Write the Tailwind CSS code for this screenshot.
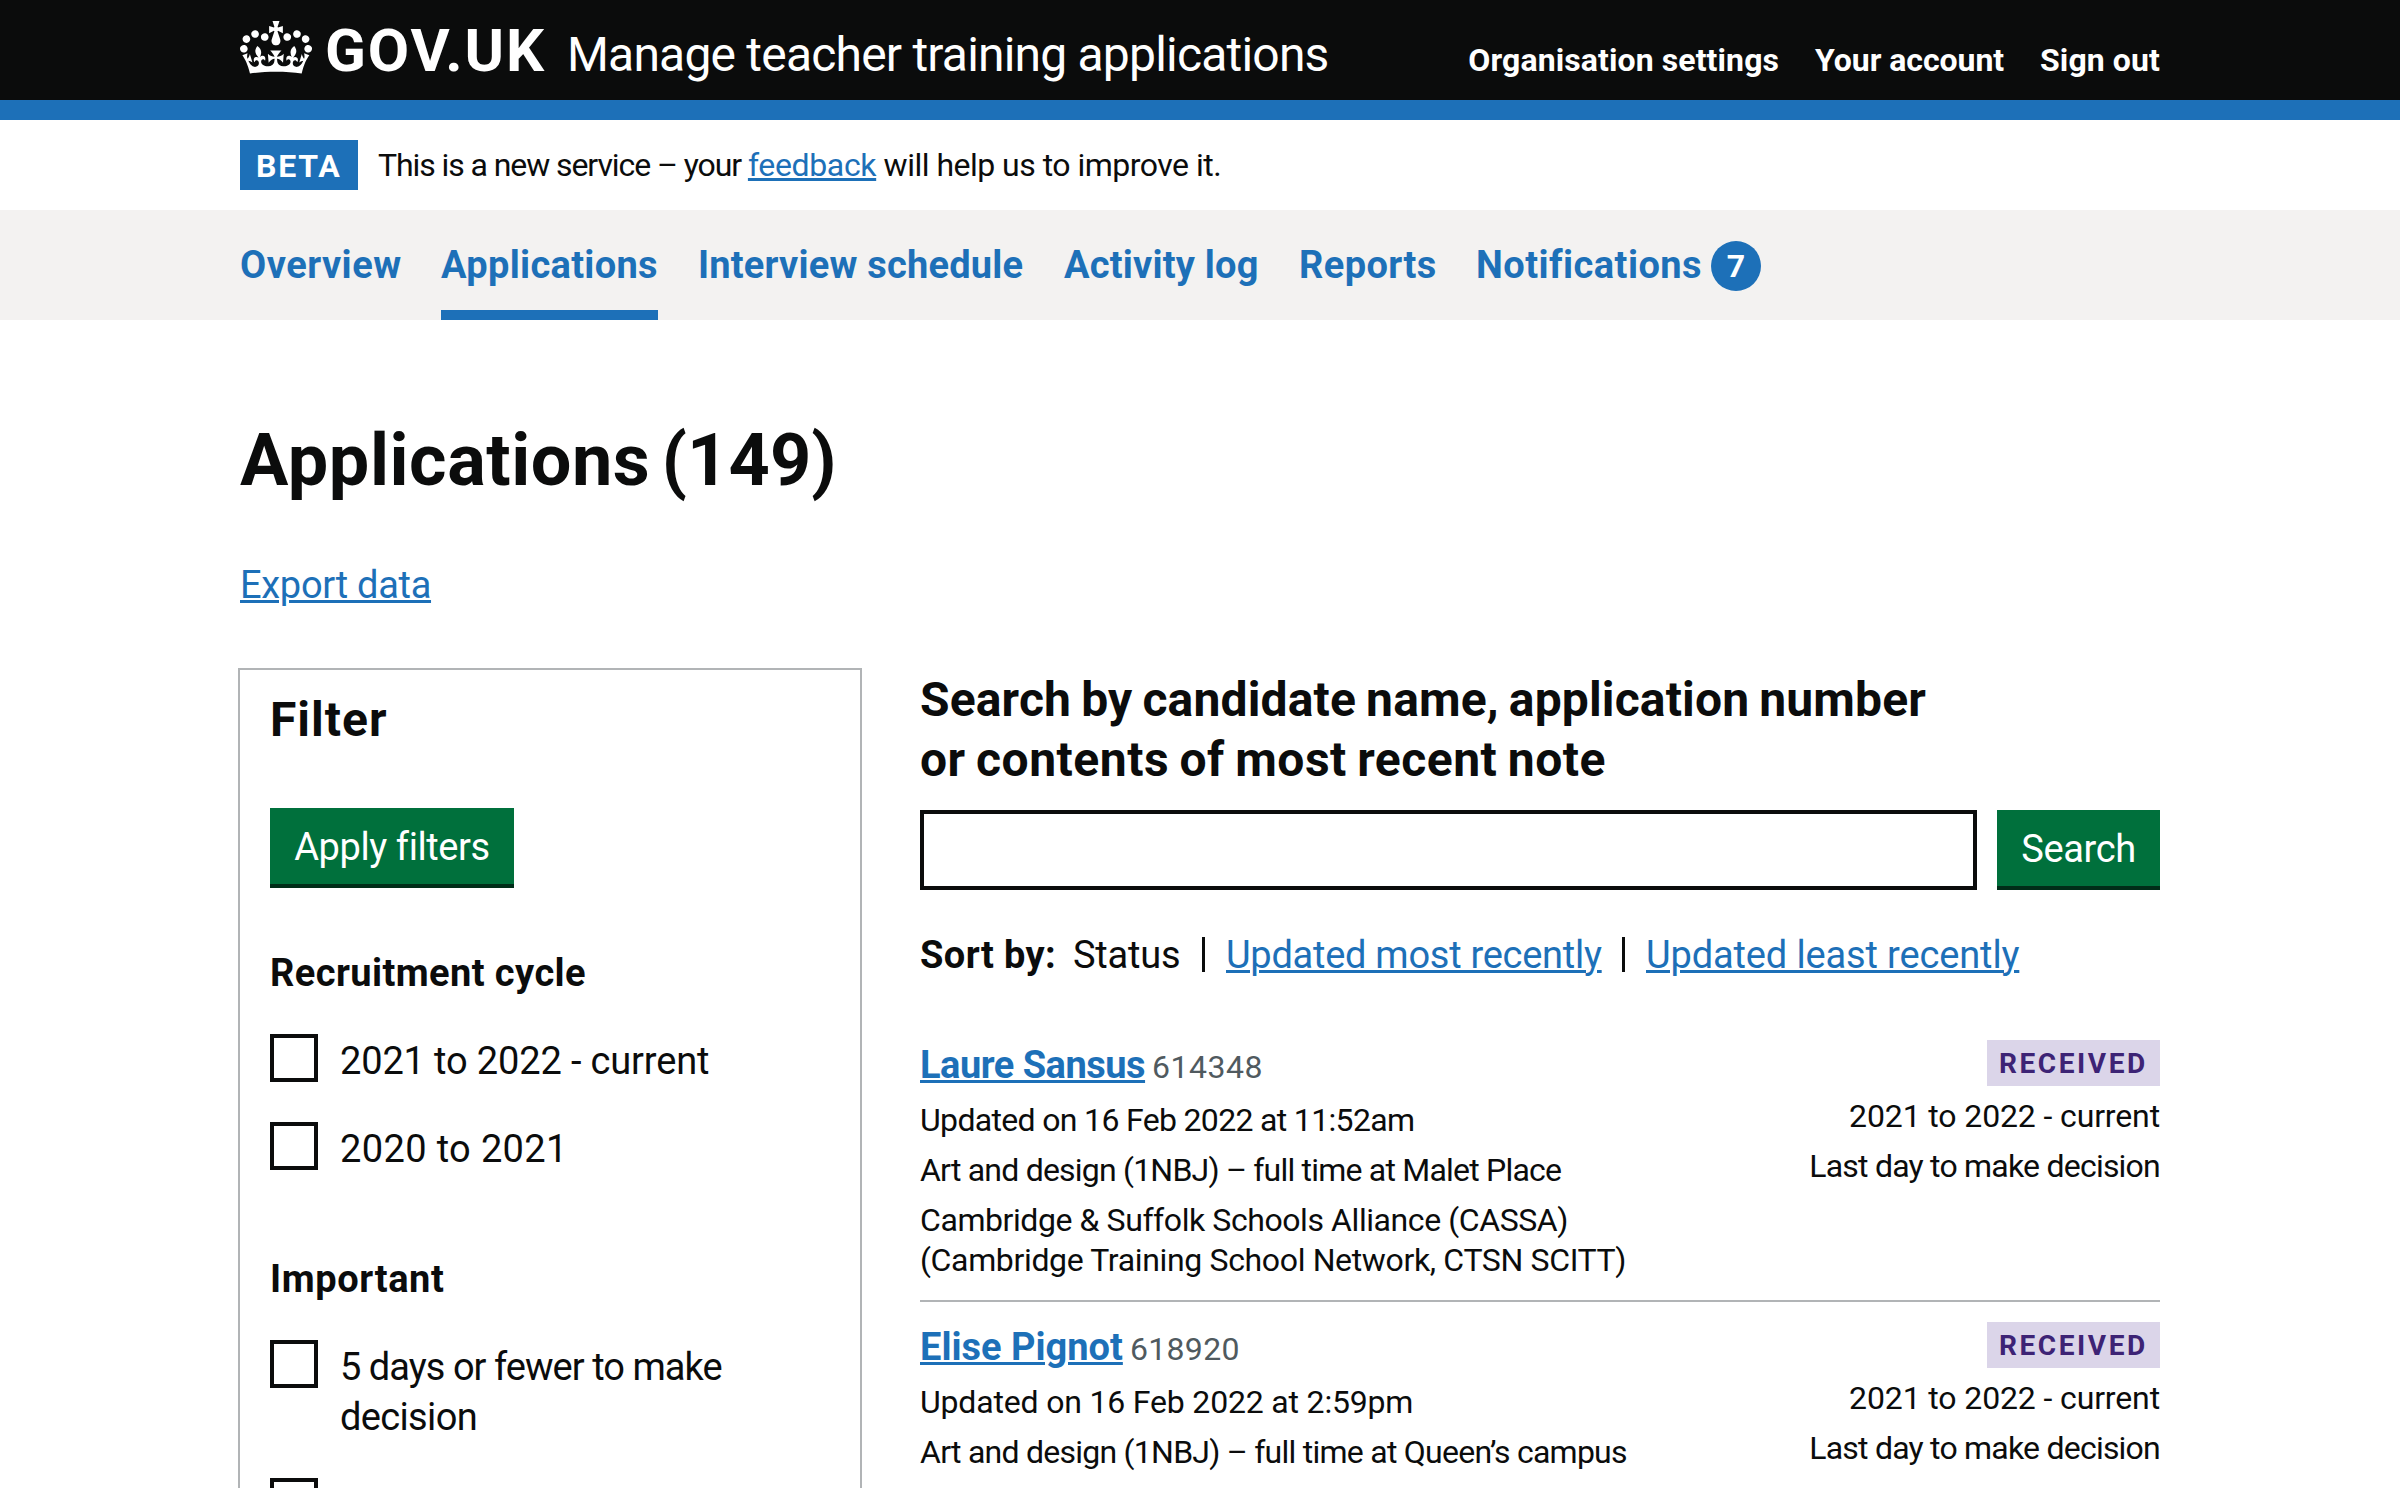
<!DOCTYPE html>
<html lang="en">
<head>
<meta charset="utf-8">
<title>Applications (149) – Manage teacher training applications – GOV.UK</title>
<script src="https://cdn.jsdelivr.net/npm/@tailwindcss/browser@4"></script>
</head>
<body class="h-[1488px] overflow-hidden bg-white font-['Roboto',sans-serif] text-[38px] leading-[50px] text-[#0b0c0c]">

<header class="h-[120px] border-b-20 border-[#1d70b8] bg-[#0b0c0c] text-white">
  <div class="mx-auto flex w-[1920px] items-baseline pt-[21px] whitespace-nowrap">
    <svg class="h-[53px] w-[72px] shrink-0 self-start" viewBox="0 0 132 97" preserveAspectRatio="none" fill="currentColor" aria-hidden="true"><path fill-rule="evenodd" d="M25 30.2c3.5 1.5 7.7-.2 9.1-3.7 1.5-3.6-.2-7.8-3.9-9.2-3.6-1.4-7.6.3-9.1 3.9-1.4 3.5.3 7.5 3.9 9zM9 39.5c3.6 1.5 7.8-.2 9.2-3.7 1.5-3.6-.2-7.8-3.9-9.1-3.6-1.5-7.6.2-9.1 3.8-1.4 3.5.3 7.5 3.8 9zM4.4 57.2c3.5 1.5 7.7-.2 9.1-3.8 1.5-3.6-.2-7.7-3.9-9.1-3.5-1.5-7.6.3-9.1 3.8-1.4 3.5.3 7.6 3.9 9.1zm38.3-21.4c3.5 1.5 7.7-.2 9.1-3.8 1.5-3.6-.2-7.7-3.9-9.1-3.6-1.5-7.6.3-9.1 3.8-1.3 3.6.4 7.7 3.9 9.1zm64.4-5.6c-3.6 1.5-7.8-.2-9.1-3.7-1.5-3.6.2-7.8 3.8-9.2 3.6-1.4 7.7.3 9.2 3.9 1.3 3.5-.4 7.5-3.9 9zm15.9 9.3c-3.6 1.5-7.7-.2-9.1-3.7-1.5-3.6.2-7.8 3.7-9.1 3.6-1.5 7.7.2 9.2 3.8 1.5 3.5-.3 7.5-3.8 9zm4.7 17.7c-3.6 1.5-7.8-.2-9.2-3.8-1.5-3.6.2-7.7 3.9-9.1 3.6-1.5 7.7.3 9.2 3.8 1.3 3.5-.4 7.6-3.9 9.1zM89.3 35.8c-3.6 1.5-7.8-.2-9.2-3.8-1.4-3.6.2-7.7 3.9-9.1 3.6-1.5 7.7.3 9.2 3.8 1.4 3.6-.3 7.7-3.9 9.1zM69.7 17.7l8.9 4.7V9.3l-8.9 2.8c-.2-.3-.5-.6-.9-.9L72.4 0H59.6l3.5 11.2c-.3.3-.6.5-.9.9l-8.8-2.8v13.1l8.8-4.7c.3.3.6.7.9.9l-5 15.4v.1c-.2.8-.4 1.6-.4 2.4 0 4.1 3.1 7.5 7 8.1h.2c.3 0 .7.1 1 .1.4 0 .7 0 1-.1h.2c4-.6 7.1-4.1 7.1-8.1 0-.8-.1-1.7-.4-2.4V34l-5.1-15.4c.4-.2.7-.6 1-.9zM66 92.8c16.9 0 32.8 1.1 47.1 3.2 4-16.9 8.9-26.7 14-33.5l-9.6-3.4c1 4.9 1.1 7.2 0 10.2-1.5-1.4-3-4.3-4.2-8.7L108.6 76c2.8-2 5-3.2 7.5-3.3-4.4 9.4-10 11.9-13.6 11.2-4.3-.8-6.3-4.6-5.6-7.9 1-4.7 5.7-5.9 8-.5 4.3-8.7-3-11.4-7.6-8.8 7.1-7.2 7.9-13.5 2.1-21.1-8 6.1-8.1 12.3-4.5 20.8-4.7-5.4-12.1-2.5-9.5 6.2 3.4-5.2 7.9-2 7.2 3.1-.6 4.3-6.4 7.8-13.5 7.2-10.3-.9-10.9-8-11.2-13.8 2.5-.5 7.1 1.8 11 7.3L80.2 60c-4.1 4.4-8 5.3-12.3 5.4 1.4-4.4 8-11.6 8-11.6H55.5s6.4 7.2 7.9 11.6c-4.2-.1-8-1-12.3-5.4l1.4 16.4c3.9-5.5 8.5-7.7 10.9-7.3-.3 5.8-.9 12.8-11.1 13.8-7.2.6-12.9-2.9-13.5-7.2-.7-5 3.8-8.3 7.1-3.1 2.7-8.7-4.6-11.6-9.4-6.2 3.7-8.5 3.6-14.7-4.6-20.8-5.8 7.6-5 13.9 2.2 21.1-4.7-2.6-11.9.1-7.7 8.8 2.3-5.5 7.1-4.2 8.1.5.7 3.3-1.3 7.1-5.7 7.9-3.5.7-9-1.8-13.5-11.2 2.5.1 4.7 1.3 7.5 3.3l-4.7-15.4c-1.2 4.4-2.7 7.2-4.3 8.7-1.1-3-.9-5.3 0-10.2l-9.5 3.4c5 6.9 9.9 16.7 14 33.5 14.8-2.1 30.8-3.2 47.7-3.2z"/></svg>
    <span class="ml-[13px] w-[242px] text-[60px] leading-[60px] font-bold tracking-[1.92px]">GOV.UK</span>
    <span class="text-[48px] tracking-[-0.8px]">Manage teacher training applications</span>
    <nav class="ml-auto flex gap-[36px] text-[32px] leading-[40px] font-bold">
      <a class="tracking-[0.1px]">Organisation settings</a>
      <a class="tracking-[-0.06px]">Your account</a>
      <a class="tracking-[0.1px]">Sign out</a>
    </nav>
  </div>
</header>

<div class="mx-auto flex h-[90px] w-[1920px] pt-[20px] text-[32px] whitespace-pre">
  <strong class="h-[50px] w-[118px] bg-[#1d70b8] pt-px pl-[16px] tracking-[1.8px] text-white">BETA</strong>
  <p class="ml-[20px] tracking-[-0.49px]"><span class="tracking-[-1.08px]">This is a new service – your </span><a class="text-[#1d70b8] underline decoration-[3px] underline-offset-[2px] tracking-[-0.35px]">feedback</a><span class="tracking-[-0.51px]"> will help us to improve it.</span></p>
</div>

<nav class="h-[110px] bg-[#f3f2f1] font-bold whitespace-nowrap text-[#1d70b8]">
  <div class="mx-auto flex h-full w-[1920px] gap-[40px] pt-[30px]">
    <a class="w-[161px] tracking-[0.48px]">Overview</a>
    <a class="w-[217px] border-b-10 border-[#1d70b8] tracking-[0.32px]">Applications</a>
    <a class="w-[326px] tracking-[0.2px]">Interview schedule</a>
    <a class="w-[195px] tracking-[0.2px]">Activity log</a>
    <a class="w-[137px] tracking-[0.4px]">Reports</a>
    <a class="flex tracking-[0.45px]"><span class="w-[235px]">Notifications</span><span class="mt-px size-[50px] rounded-full bg-[#1d70b8] text-center text-[32px] leading-[50px] tracking-normal text-white">7</span></a>
  </div>
</nav>

<main class="mx-auto w-[1920px] pt-[101px]">
  <h1 class="text-[72px] leading-[80px] font-bold tracking-[0.1px]"><span class="tracking-[0.55px] [word-spacing:-7px]">Applications </span>(149)</h1>
  <p class="mt-[59px]"><a class="text-[#1d70b8] underline decoration-[3px] underline-offset-[2px] tracking-[-0.3px]">Export data</a></p>

  <div class="mt-[58px] flex">
    <aside class="-ml-[2px] h-[900px] w-[624px] shrink-0 border-2 border-[#b1b4b6] px-[30px] pt-[20px]">
      <h2 class="text-[48px] leading-[60px] font-bold tracking-[1.02px]">Filter</h2>
      <button class="mt-[58px] block h-[80px] w-[244px] border-b-4 border-[#002d18] bg-[#00703c] pt-[2px] text-[38px] leading-[74px] tracking-[-0.41px] text-white">Apply filters</button>

      <h3 class="mt-[60px] font-bold tracking-[0.42px]">Recruitment cycle</h3>
      <div class="mt-[36px] flex flex-col gap-[36px]">
        <label class="flex gap-[22px]"><span class="size-[48px] shrink-0 border-4 border-[#0b0c0c]"></span><span class="pt-[2px] tracking-[-0.15px]">2021 to 2022 - current</span></label>
        <label class="flex gap-[22px]"><span class="size-[48px] shrink-0 border-4 border-[#0b0c0c]"></span><span class="pt-[2px] tracking-[0.36px]">2020 to 2021</span></label>
      </div>

      <h3 class="mt-[80px] font-bold tracking-[0.6px]">Important</h3>
      <div class="mt-[36px] flex flex-col gap-[36px]">
        <label class="flex gap-[22px]"><span class="size-[48px] shrink-0 border-4 border-[#0b0c0c]"></span><span class="pt-[2px] tracking-[-0.96px]">5 days or fewer to make<br><span class="tracking-[-0.65px]">decision</span></span></label>
        <label class="flex gap-[22px]"><span class="size-[48px] shrink-0 border-4 border-[#0b0c0c]"></span></label>
      </div>
    </aside>

    <section class="ml-[58px] w-[1240px] shrink-0 pt-[2px]">
      <h2 class="text-[48px] leading-[60px] font-bold whitespace-nowrap [word-spacing:-2px]"><span class="tracking-[0.15px]">Search by candidate name, application number</span><br><span class="tracking-[0.5px]">or contents of most recent note</span></h2>
      <div class="mt-[20px] flex gap-[20px]">
        <input class="h-[80px] w-[1057px] border-4 border-[#0b0c0c]" aria-label="Search">
        <button class="h-[80px] w-[163px] border-b-4 border-[#002d18] bg-[#00703c] pt-[2px] text-[38px] leading-[74px] tracking-[-0.36px] text-white">Search</button>
      </div>

      <div class="mt-[40px] flex h-[50px] whitespace-nowrap">
        <strong class="w-[153px] tracking-[0.4px]">Sort by:</strong>
        <span class="w-[129px] tracking-[-0.2px]">Status</span>
        <span class="mt-[7px] h-[35px] w-[3px] bg-[#0b0c0c]"></span>
        <a class="ml-[21px] w-[396px] tracking-[-0.27px]"><span class="text-[#1d70b8] underline decoration-[3px] underline-offset-[2px]">Updated most recently</span></a>
        <span class="mt-[7px] h-[35px] w-[3px] bg-[#0b0c0c]"></span>
        <a class="ml-[21px] tracking-[-0.14px]"><span class="text-[#1d70b8] underline decoration-[3px] underline-offset-[2px]">Updated least recently</span></a>
      </div>

      <div class="mt-[40px] text-[32px] leading-[40px] whitespace-nowrap">
        <article class="flex justify-between border-b-2 border-[#b1b4b6] py-[20px]">
          <div class="flex flex-col gap-[10px]">
            <h3 class="flex items-baseline text-[38px] leading-[50px]"><a class="w-[232px] font-bold tracking-[-0.5px]"><span class="text-[#1d70b8] underline decoration-[3px] underline-offset-[2px]">Laure Sansus</span></a><span class="text-[32px] leading-[40px] tracking-[0.5px] text-[#505a5f]">614348</span></h3>
            <p class="tracking-[-0.67px]">Updated on 16 Feb 2022 at 11:52am</p>
            <p class="tracking-[-0.79px]">Art and design (1NBJ) – full time at Malet Place</p>
            <p><span class="tracking-[-0.42px]">Cambridge &amp; Suffolk Schools Alliance (CASSA)</span><br><span class="tracking-[-0.35px]">(Cambridge Training School Network, CTSN SCITT)</span></p>
          </div>
          <div class="flex flex-col items-end gap-[10px]">
            <strong class="h-[46px] w-[173px] bg-[#dbd5e9] pt-px pl-[12px] text-[28px] leading-[46px] tracking-[2.57px] text-[#3d2375]">RECEIVED</strong>
            <p class="tracking-[-0.13px]">2021 to 2022 - current</p>
            <p class="tracking-[-0.78px]">Last day to make decision</p>
          </div>
        </article>
        <article class="flex justify-between py-[20px]">
          <div class="flex flex-col gap-[10px]">
            <h3 class="flex items-baseline text-[38px] leading-[50px]"><a class="w-[210px] font-bold"><span class="text-[#1d70b8] underline decoration-[3px] underline-offset-[2px]">Elise Pignot</span></a><span class="text-[32px] leading-[40px] tracking-[0.3px] text-[#505a5f]">618920</span></h3>
            <p class="tracking-[-0.18px]">Updated on 16 Feb 2022 at 2:59pm</p>
            <p class="tracking-[-0.75px]">Art and design (1NBJ) – full time at Queen’s campus</p>
          </div>
          <div class="flex flex-col items-end gap-[10px]">
            <strong class="h-[46px] w-[173px] bg-[#dbd5e9] pt-px pl-[12px] text-[28px] leading-[46px] tracking-[2.57px] text-[#3d2375]">RECEIVED</strong>
            <p class="tracking-[-0.13px]">2021 to 2022 - current</p>
            <p class="tracking-[-0.78px]">Last day to make decision</p>
          </div>
        </article>
      </div>
    </section>
  </div>
</main>
</body>
</html>
